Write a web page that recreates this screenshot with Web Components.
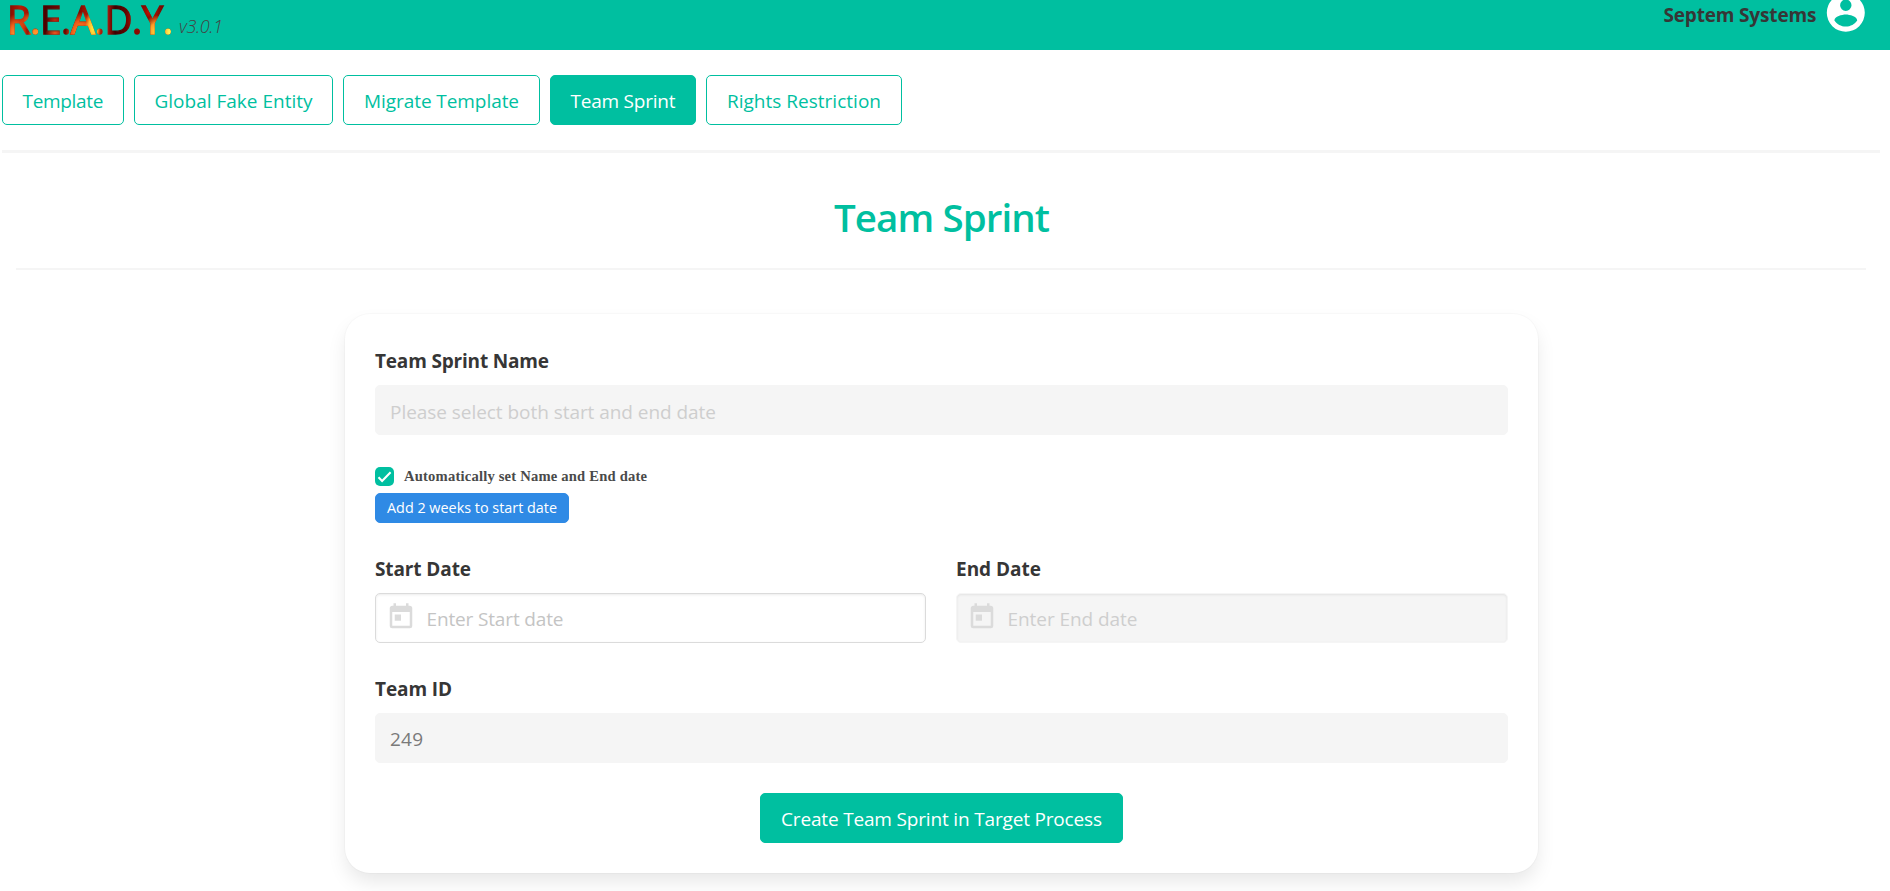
<!DOCTYPE html>
<html lang="en">
<head>
<meta charset="utf-8">
<title>R.E.A.D.Y.</title>
<style>
html,body{margin:0;height:100%;overflow:hidden;background:#fff}
body{font-family:"Open Sans","Noto Sans",sans-serif;font-size:19px;color:#363636;--brand:#00bfa0}
</style>
</head>
<body>
<ready-app></ready-app>
<script>
const define = (name, html, base = HTMLElement) => customElements.define(name, class extends base {
  constructor(){ super(); this.attachShadow({mode:'open'}).innerHTML = html; }
});

/* Text run tracked to a fixed measure given by its "w" attribute. */
class TrackedText extends HTMLElement {
  connectedCallback(){
    const w = +this.getAttribute('w'), n = this.textContent.length;
    const box = this.shadowRoot.querySelector('span');
    const natural = box.getBoundingClientRect().width;
    const ls = (w - natural) / (n - 1);
    box.style.letterSpacing = ls + 'px';
    box.style.marginRight = -ls + 'px';
  }
}
define('fit-text', `<style>:host{display:inline-block;white-space:nowrap}span{display:inline-block}</style><span><slot></slot></span>`, TrackedText);

define('ready-logo', `<style>
:host{display:block;white-space:nowrap;font-size:38.5px;line-height:38px}
span{display:inline-block;padding-bottom:6px;color:transparent;-webkit-text-stroke:1.3px transparent;-webkit-background-clip:text;background-clip:text;
background-image:
radial-gradient(ellipse 12px 22px at 8px 36px,#ff9a35 0,#f0641c 50%,transparent 100%),
radial-gradient(ellipse 12px 9px at 24px 21px,#ff8428 0,transparent 100%),
radial-gradient(circle 8px at 29px 34px,#ff9c30 0,#ff8a28 50%,transparent 100%),
radial-gradient(ellipse 10px 5px at 48px 33px,#f05a20 0,transparent 100%),
radial-gradient(ellipse 9px 5px at 48px 20px,#c42b10 0,transparent 100%),
radial-gradient(ellipse 8px 20px at 86px 28px,#ffef3e 0,#ffb22a 55%,transparent 100%),
radial-gradient(ellipse 15px 22px at 73px 34px,#ff9d2a 0,#ed5516 60%,transparent 100%),
radial-gradient(ellipse 8px 18px at 126px 20px,#a50c00 0,transparent 100%),
radial-gradient(ellipse 13px 17px at 149px 32px,#ffd837 0,#ff9a27 50%,transparent 100%),
radial-gradient(circle 9px at 163px 33px,#fff558 0,#fff04a 70%,transparent 100%),
radial-gradient(ellipse 10px 12px at 142px 12px,#c51400 0,transparent 100%),
linear-gradient(90deg,#7a0c00 0,#b81c05 14px,#8c0d00 27px,#4a0000 38px,#7b0800 56px,#3d0000 64px,#a01200 78px,#b31a0c 100px,#3c0000 108px,#6a0500 122px,#8e0a00 132px,#500000 140px,#8d0c00 150px,#4c0000 165px)}
</style><span><slot></slot></span>`, TrackedText);

define('app-header', `<style>
:host{display:flex;height:50px;background:var(--brand);justify-content:space-between;align-items:flex-start}
.l,.r{display:flex;align-items:flex-start}
.l{padding-left:7px}
.v{font-style:italic;font-weight:300;font-size:18px;line-height:24px;color:#444;margin:14px 0 0 6px}
.r{padding-right:21px}.n{font-weight:700;line-height:26px;margin:2px 7px 0 0}
svg{display:block;width:45.6px;height:45.6px;margin-top:-10px}
</style>
<div class="l"><ready-logo w="166">R.E.A.D.Y.</ready-logo><fit-text class="v" w="44">v3.0.1</fit-text></div>
<div class="r"><fit-text class="n" w="153">Septem Systems</fit-text>
<svg viewBox="0 0 24 24" fill="#fff"><path d="M12,19.2C9.5,19.2 7.29,17.92 6,16C6.03,14 10,12.9 12,12.9C14,12.9 17.97,14 18,16C16.71,17.92 14.5,19.2 12,19.2M12,5A3,3 0 0,1 15,8A3,3 0 0,1 12,11A3,3 0 0,1 9,8A3,3 0 0,1 12,5M12,2A10,10 0 0,0 2,12A10,10 0 0,0 12,22A10,10 0 0,0 22,12C22,6.47 17.5,2 12,2Z"/></svg></div>`);

define('ui-button', `<style>
:host{display:flex;box-sizing:border-box;height:50px;align-items:center;justify-content:center;padding:2px 0 0;border:1px solid var(--brand);border-radius:5px;color:var(--brand);background:#fff;line-height:28px}
:host([solid]){background:var(--brand);color:#fff}
:host([info]){background:#2f8ae5;border-color:#2f8ae5;color:#fff;height:30px;padding-top:0;font-size:14.4px;line-height:20px}
</style><slot></slot>`);

define('nav-tabs', `<style>
:host{display:flex;gap:10px;margin:25px 10px 0 2px;padding-bottom:25px;border-bottom:3px solid #f5f5f5}
</style>
<ui-button style="width:122px"><fit-text w="81">Template</fit-text></ui-button>
<ui-button style="width:199px"><fit-text w="158">Global Fake Entity</fit-text></ui-button>
<ui-button style="width:197px"><fit-text w="155">Migrate Template</fit-text></ui-button>
<ui-button solid style="width:146px"><fit-text w="105">Team Sprint</fit-text></ui-button>
<ui-button style="width:196px"><fit-text w="154">Rights Restriction</fit-text></ui-button>`);

define('page-title', `<style>
:host{display:block;margin:0 24px 0 16px;border-bottom:2px solid #f5f5f5;text-align:center;color:var(--brand);font-size:38.5px;font-weight:600;line-height:50px;box-sizing:border-box;height:117px;padding:39px 0 0 2px}
</style><slot></slot>`);

define('form-field', `<style>
:host{display:block}
.label{display:block;font-weight:700;height:30px;line-height:32px;margin-bottom:10px}
.box{display:flex;box-sizing:border-box;height:50px;align-items:center;border:1px solid #f5f5f5;border-radius:5px;background:#f5f5f5;padding:3px 14px 0;color:#cecece;line-height:28px}
:host([value]) .box{color:#7a7a7a;padding-top:2px}
:host([date]) .box{padding:1px 9px 0;box-shadow:inset 0 1px 2.5px rgba(10,10,10,.08)}
:host([open]) .box{background:#fff;border-color:#dbdbdb;color:#c4c4c4}
svg{display:none;width:30px;height:30px;margin:-4px 11px 0 .5px;fill:#dbdbdb}
:host([date]) svg{display:block}
</style><div class="label"><slot name="label"></slot></div>
<div class="box"><svg viewBox="0 0 24 24"><path d="M7,10H12V15H7M19,19H5V8H19M19,3H18V1H16V3H8V1H6V3H5C3.89,3 3,3.9 3,5V19A2,2 0 0,0 5,21H19A2,2 0 0,0 21,19V5A2,2 0 0,0 19,3Z"/></svg><slot></slot></div>`);

define('check-row', `<style>
:host{display:flex;align-items:center;height:20px;font:bold 14.6px/20px "Liberation Serif",serif;color:#4a4a4a}
svg{width:19px;height:19px;margin-right:10px}
</style><svg viewBox="0 0 19 19"><rect width="19" height="19" rx="5" fill="#00bfa0"/><path d="M3.5 10.3 7.1 13.9 15.6 5.3" fill="none" stroke="#fff" stroke-width="2.1"/></svg><slot></slot>`);

define('sprint-form', `<style>
:host{display:block;box-sizing:border-box;width:1193px;height:559px;margin:44px 0 0 345px;padding:31px 30px 30px;border-radius:25px;background:#fff;box-shadow:0 10px 20px -2.5px rgba(10,10,10,.1),0 0 0 1px rgba(10,10,10,.02)}
.row{display:grid;grid-template-columns:551px 552px;gap:30px;margin:30px 0}
check-row{margin:31px 0 7px}
</style>
<form-field><fit-text slot="label" w="174">Team Sprint Name</fit-text><fit-text w="326">Please select both start and end date</fit-text></form-field>
<check-row><fit-text w="243">Automatically set Name and End date</fit-text></check-row>
<ui-button info style="width:194px"><fit-text w="170">Add 2 weeks to start date</fit-text></ui-button>
<div class="row">
<form-field date open><fit-text slot="label" w="96">Start Date</fit-text><fit-text w="137">Enter Start date</fit-text></form-field>
<form-field date><fit-text slot="label" w="85">End Date</fit-text><fit-text w="130">Enter End date</fit-text></form-field>
</div>
<form-field value><fit-text slot="label" w="77">Team ID</fit-text><fit-text w="33">249</fit-text></form-field>
<ui-button solid style="width:363px;margin:30px auto 0"><fit-text w="321">Create Team Sprint in Target Process</fit-text></ui-button>`);

define('ready-app', `<style>:host{display:block;height:891px;overflow:hidden}</style>
<app-header></app-header>
<nav-tabs></nav-tabs>
<page-title><fit-text w="216">Team Sprint</fit-text></page-title>
<sprint-form></sprint-form>`);
</script>
</body>
</html>
